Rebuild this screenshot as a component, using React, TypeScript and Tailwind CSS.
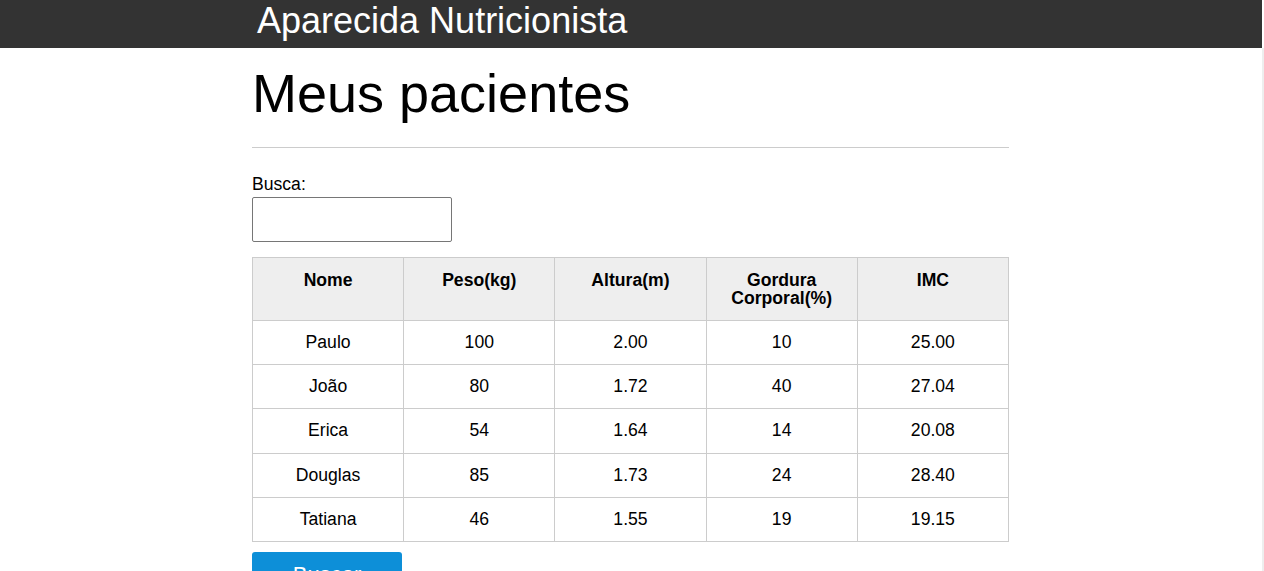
const pacientes = [
  { nome: "Paulo", peso: "100", altura: "2.00", gordura: "10", imc: "25.00" },
  { nome: "João", peso: "80", altura: "1.72", gordura: "40", imc: "27.04" },
  { nome: "Erica", peso: "54", altura: "1.64", gordura: "14", imc: "20.08" },
  { nome: "Douglas", peso: "85", altura: "1.73", gordura: "24", imc: "28.40" },
  { nome: "Tatiana", peso: "46", altura: "1.55", gordura: "19", imc: "19.15" },
];

const COLUMNS = ["Nome", "Peso(kg)", "Altura(m)", "Gordura Corporal(%)", "IMC"];

export default function App() {
  return (
    <div className="flex h-[571px] overflow-hidden bg-white font-['Liberation_Sans',Arial,sans-serif] text-[17.6px] text-black">
      <div className="w-[1262px] shrink-0">
        <header className="h-[48px] bg-[#333333]">
          <div className="ml-[252px] w-[757px] pl-[5px]">
            <h1 className="text-[36px] leading-[41px] text-white">Aparecida Nutricionista</h1>
          </div>
        </header>

        <main className="ml-[252px] w-[757px]">
          <h2 className="mt-[14px] text-[54px] leading-[62px]">Meus pacientes</h2>
          <hr className="mt-[23px] border-t border-[#cccccc]" />

          <label className="mt-[26px] block leading-[20px]" htmlFor="filtro">
            Busca:
          </label>
          <input
            id="filtro"
            className="mt-[3px] block h-[45px] w-[200px] rounded-[2px] border border-[#767676] px-2"
          />

          <table className="mt-[15px] w-[757px] table-fixed border-collapse text-center">
            <thead>
              <tr className="bg-[#eeeeee]">
                {COLUMNS.map((c) => (
                  <th
                    key={c}
                    className="border border-[#cccccc] px-[20px] py-[13px] align-top font-bold leading-[18px]"
                  >
                    {c}
                  </th>
                ))}
              </tr>
            </thead>
            <tbody>
              {pacientes.map((p) => (
                <tr key={p.nome}>
                  <td className="border border-[#cccccc] py-[12px] leading-[19.2px]">{p.nome}</td>
                  <td className="border border-[#cccccc] py-[12px] leading-[19.2px]">{p.peso}</td>
                  <td className="border border-[#cccccc] py-[12px] leading-[19.2px]">{p.altura}</td>
                  <td className="border border-[#cccccc] py-[12px] leading-[19.2px]">{p.gordura}</td>
                  <td className="border border-[#cccccc] py-[12px] leading-[19.2px]">{p.imc}</td>
                </tr>
              ))}
            </tbody>
          </table>

          <button className="mt-[10px] h-[44px] w-[150px] rounded-[3px] bg-[#0d8fd8] pt-[2px] text-[22px] leading-[26px] text-white">
            Buscar
          </button>
        </main>
      </div>
      <div className="mt-[48px] w-[2px] bg-[#eeeeee]" />
    </div>
  );
}
